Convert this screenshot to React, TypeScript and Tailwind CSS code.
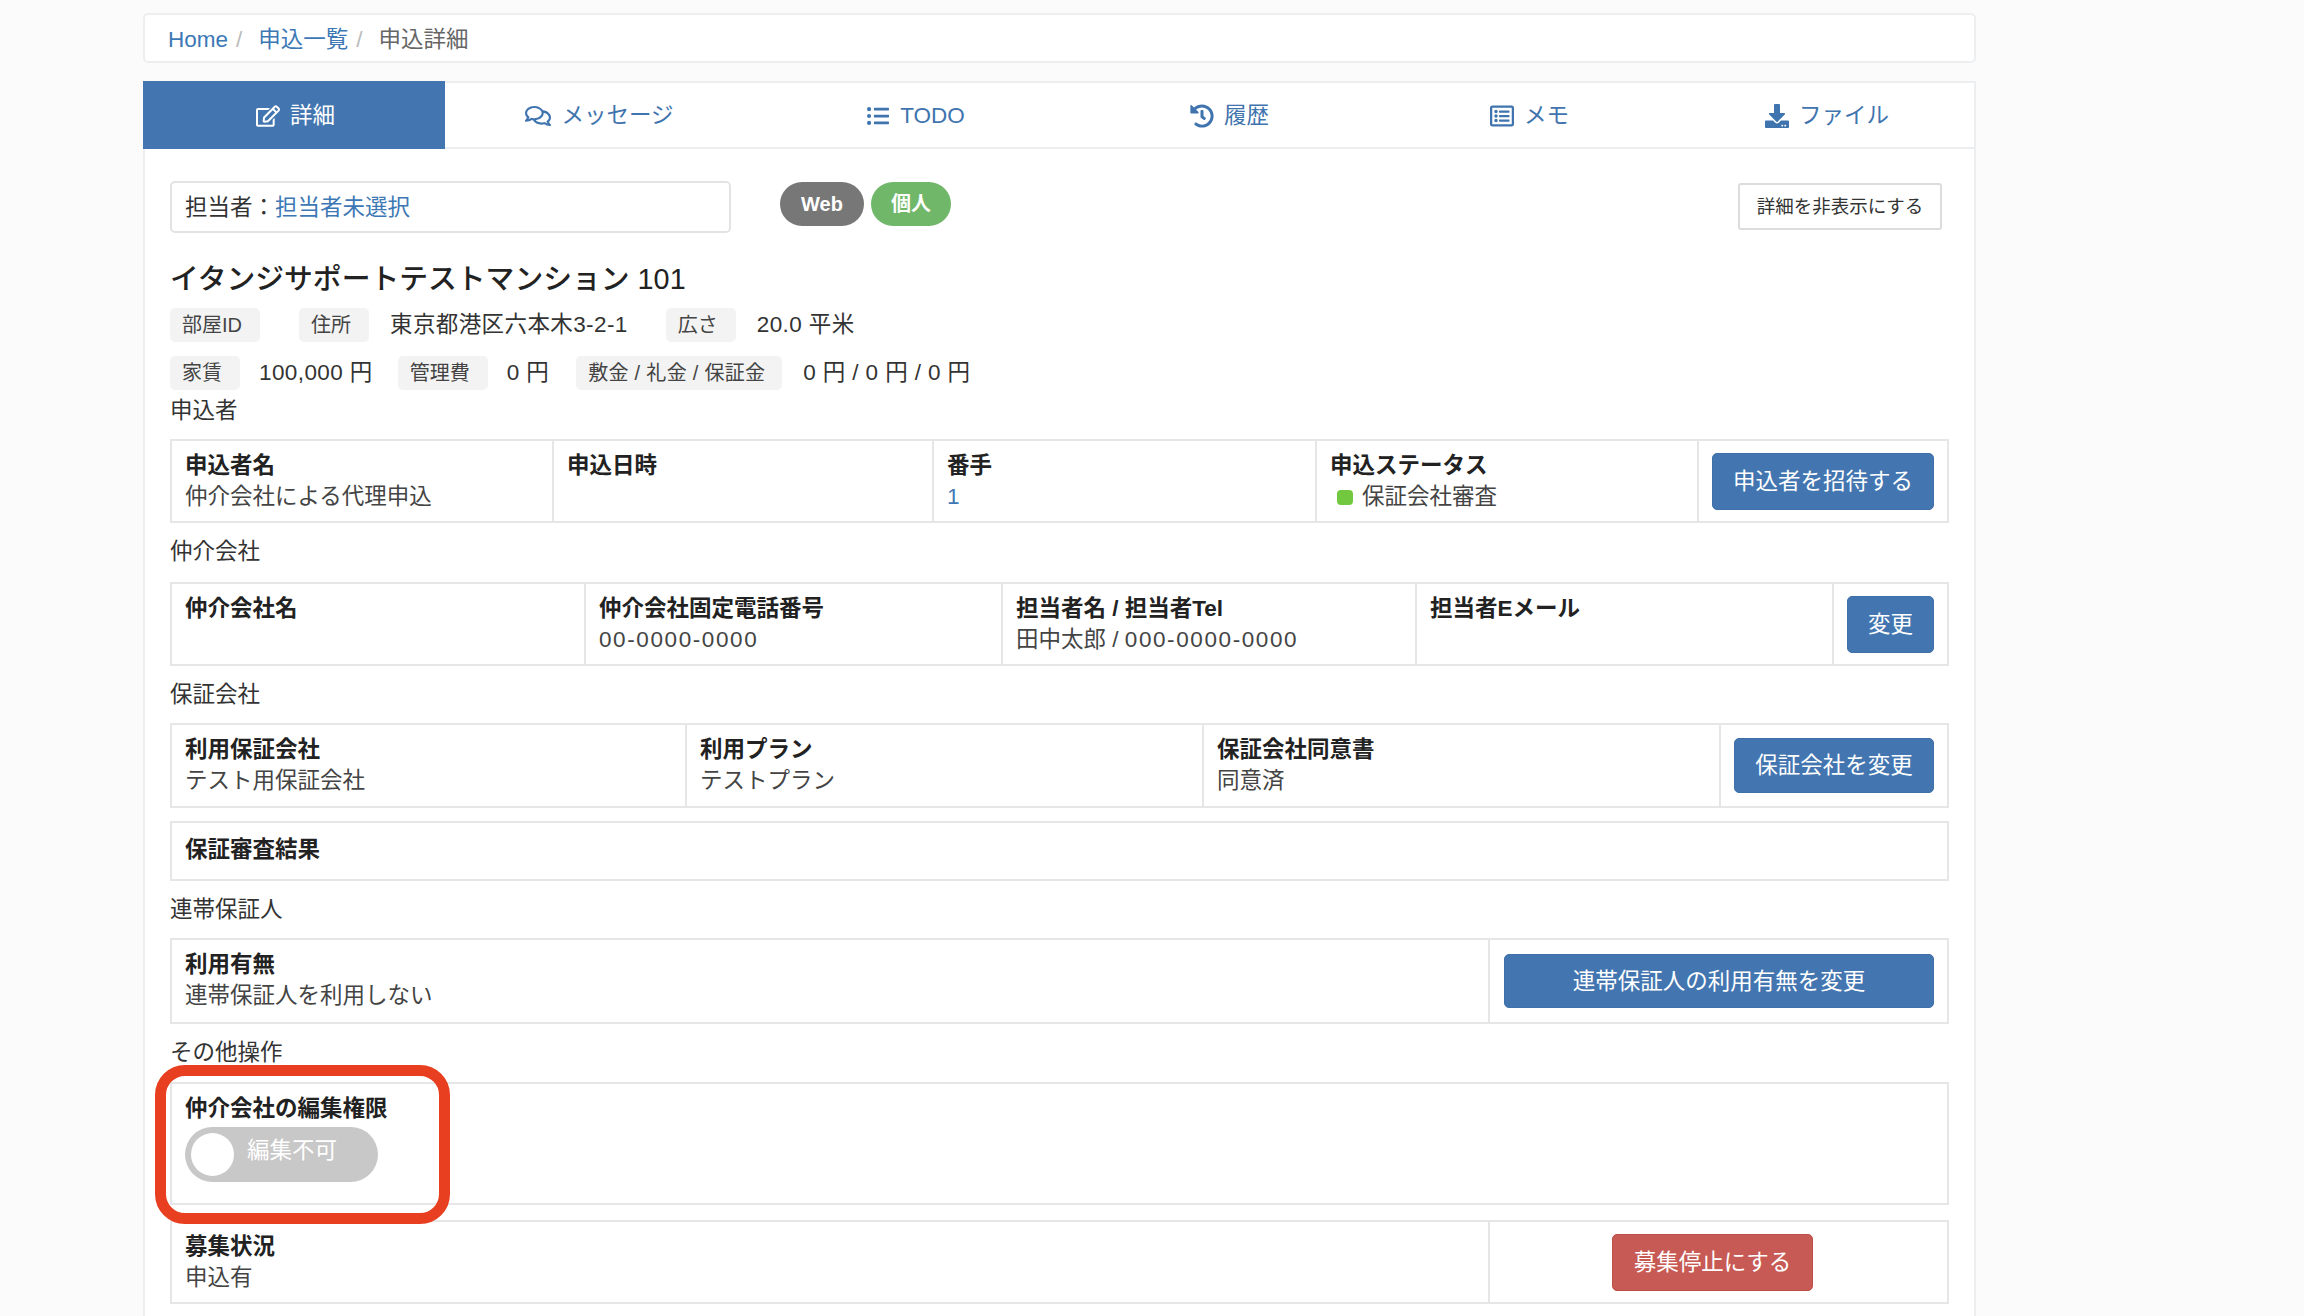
import { FaRegEdit, FaRegComments, FaListUl, FaHistory, FaRegListAlt, FaDownload } from "react-icons/fa";

const tabs = [
  { label: "詳細", icon: <FaRegEdit className="w-[24px] h-[24px]" />, active: true },
  { label: "メッセージ", icon: <FaRegComments className="w-[26px] h-[24px]" /> },
  { label: "TODO", icon: <FaListUl className="w-[24px] h-[22px]" /> },
  { label: "履歴", icon: <FaHistory className="w-[24px] h-[24px]" /> },
  { label: "メモ", icon: <FaRegListAlt className="w-[24px] h-[24px]" /> },
  { label: "ファイル", icon: <FaDownload className="w-[24px] h-[24px]" /> },
];

const Chip = ({ children, className = "" }: { children: React.ReactNode; className?: string }) => (
  <span className={`h-[34px] pl-[12px] pr-[18px] rounded-[5px] bg-[#f3f3f3] text-[20px] text-[#444] whitespace-nowrap flex items-center ${className}`}>
    {children}
  </span>
);

const Cell = ({ label, value, className = "" }: { label: string; value?: React.ReactNode; className?: string }) => (
  <div className={`px-[13px] pt-[9px] border-r-2 border-[#e6e6e6] ${className}`}>
    <div className="font-bold leading-[32px] text-[#222]">{label}</div>
    {value && <div className="leading-[30px] text-[#444]">{value}</div>}
  </div>
);

const Btn = ({ children, className = "" }: { children: React.ReactNode; className?: string }) => (
  <button className={`rounded-[5px] bg-[#4376b0] border border-[#3f70a8] text-white pt-[1px] flex items-center justify-center ${className}`}>
    {children}
  </button>
);

const SectionLabel = ({ children, className = "" }: { children: React.ReactNode; className?: string }) => (
  <div className={`leading-[32px] text-[#333] ${className}`}>{children}</div>
);

const App = () => {
  return (
    <div className="w-[2304px] h-[1316px] overflow-hidden bg-[#fbfbfc] pl-[143px] pt-[13px] text-[22.5px] font-['Liberation_Sans','Noto_Sans_CJK_JP',sans-serif] text-[#333]">
      <div className="w-[1833px] h-[50px] bg-white border-2 border-[#eceef0] rounded-[5px] pl-[23px] pt-[3px] flex items-center gap-[8px]">
        <span className="text-[#3d78b5]">Home</span>
        <span className="text-[#bbb]">/</span>
        <span className="ml-[8px] text-[#3d78b5]">申込一覧</span>
        <span className="text-[#bbb]">/</span>
        <span className="ml-[8px] text-[#666]">申込詳細</span>
      </div>

      <div className="w-[1833px] h-[1240px] mt-[18px] bg-white border-x-2 border-t-2 border-[#eceef0]">
        <div className="grid grid-cols-[300px_306px_326px_302px_298px_297px] h-[66px] border-b-2 border-[#eceef0]">
          {tabs.map((tab) => (
            <div
              key={tab.label}
              className={`flex items-center justify-center gap-[10px] pt-[2px] pl-[3px] ${tab.active ? "bg-[#4376b0] text-white -mb-[2px] -mt-[2px] -ml-[2px]" : "text-[#3f74ae]"}`}
            >
              {tab.icon}
              <span>{tab.label}</span>
            </div>
          ))}
        </div>

        <div className="pl-[25px] pr-[25px]">
          <div className="flex items-start pt-[32px]">
            <div className="w-[561px] h-[52px] border-2 border-[#e3e3e3] rounded-[5px] pl-[13px] pt-[2px] flex items-center">
              <span>担当者：</span>
              <span className="text-[#3d78b5]">担当者未選択</span>
            </div>
            <div className="ml-[49px] mt-[1px] flex gap-[7px] text-[20px] font-bold text-white">
              <span className="w-[84px] h-[44px] rounded-full bg-[#777] flex items-center justify-center">Web</span>
              <span className="w-[80px] h-[44px] rounded-full bg-[#70b769] flex items-center justify-center">個人</span>
            </div>
            <button className="ml-auto mr-[7px] mt-[2px] w-[204px] h-[47px] bg-white border-2 border-[#dcdcdc] rounded-[3px] text-[18.5px] text-[#333] flex items-center justify-center">
              詳細を非表示にする
            </button>
          </div>

          <div className="mt-[27px] h-[40px] flex items-center text-[28.8px] font-medium text-[#222]">
            イタンジサポートテストマンション 101
          </div>

          <div className="mt-[8px] flex items-center">
            <Chip>部屋ID</Chip>
            <Chip className="ml-[39px]">住所</Chip>
            <span className="ml-[21px] tracking-[0.4px]">東京都港区六本木3-2-1</span>
            <Chip className="ml-[38px]">広さ</Chip>
            <span className="ml-[21px] tracking-[0.4px]">20.0 平米</span>
          </div>
          <div className="mt-[14px] flex items-center">
            <Chip>家賃</Chip>
            <span className="ml-[19px] tracking-[0.4px]">100,000 円</span>
            <Chip className="ml-[25px]">管理費</Chip>
            <span className="ml-[19px] tracking-[0.4px]">0 円</span>
            <Chip className="ml-[27px] w-[206px] tracking-[0.3px]">敷金 / 礼金 / 保証金</Chip>
            <span className="ml-[21px] tracking-[0.4px]">0 円 / 0 円 / 0 円</span>
          </div>

          <SectionLabel className="mt-[5px] mb-[12px]">申込者</SectionLabel>
          <div className="w-[1779px] h-[84px] border-2 border-[#e6e6e6] grid grid-cols-[382px_380px_383px_382px_1fr]">
            <Cell label="申込者名" value="仲介会社による代理申込" />
            <Cell label="申込日時" />
            <Cell label="番手" value={<span className="text-[#3d78b5]">1</span>} />
            <Cell
              label="申込ステータス"
              value={
                <span className="flex items-center pl-[7px] gap-[9px]">
                  <span className="w-[16px] h-[15px] rounded-[4px] bg-[#72c93f]" />
                  保証会社審査
                </span>
              }
            />
            <div className="flex items-center justify-end pr-[13px]">
              <Btn className="w-[222px] h-[57px]">申込者を招待する</Btn>
            </div>
          </div>

          <SectionLabel className="mt-[13px] mb-[14px]">仲介会社</SectionLabel>
          <div className="w-[1779px] h-[84px] border-2 border-[#e6e6e6] grid grid-cols-[414px_417px_414px_417px_1fr]">
            <Cell label="仲介会社名" />
            <Cell label="仲介会社固定電話番号" value={<span className="tracking-[1.6px]">00-0000-0000</span>} />
            <Cell label="担当者名 / 担当者Tel" value={<span>田中太郎 / <span className="tracking-[1.6px]">000-0000-0000</span></span>} />
            <Cell label="担当者Eメール" />
            <div className="flex items-center justify-end pr-[13px]">
              <Btn className="w-[87px] h-[57px]">変更</Btn>
            </div>
          </div>

          <SectionLabel className="mt-[13px] mb-[12px]">保証会社</SectionLabel>
          <div className="w-[1779px] h-[85px] border-2 border-[#e6e6e6] grid grid-cols-[515px_517px_517px_1fr]">
            <Cell label="利用保証会社" value="テスト用保証会社" />
            <Cell label="利用プラン" value="テストプラン" />
            <Cell label="保証会社同意書" value="同意済" />
            <div className="flex items-center justify-end pr-[13px]">
              <Btn className="w-[200px] h-[55px]">保証会社を変更</Btn>
            </div>
          </div>

          <div className="mt-[13px] w-[1779px] h-[60px] border-2 border-[#e6e6e6] px-[13px] pb-[3px] flex items-center font-bold text-[#222]">
            保証審査結果
          </div>

          <SectionLabel className="mt-[13px] mb-[12px]">連帯保証人</SectionLabel>
          <div className="w-[1779px] h-[86px] border-2 border-[#e6e6e6] grid grid-cols-[1318px_1fr]">
            <Cell label="利用有無" value="連帯保証人を利用しない" />
            <div className="flex items-center justify-end pr-[13px]">
              <Btn className="w-[430px] h-[54px]">連帯保証人の利用有無を変更</Btn>
            </div>
          </div>

          <SectionLabel className="mt-[13px] mb-[13px]">その他操作</SectionLabel>
          <div className="relative w-[1779px] h-[123px] border-2 border-[#e6e6e6] px-[13px] pt-[9px]">
            <div className="font-bold leading-[32px] text-[#222]">仲介会社の編集権限</div>
            <div className="mt-[2px] w-[193px] h-[55px] rounded-full bg-[#c8c8c8] relative flex items-center">
              <span className="absolute left-[6px] top-[6px] w-[43px] h-[43px] rounded-full bg-white" />
              <span className="ml-[62px] -mt-[8px] text-white">編集不可</span>
            </div>
            <div className="absolute -left-[17px] -top-[19px] w-[295px] h-[159px] border-[11px] border-[#e83f20] rounded-[30px]" />
          </div>

          <div className="mt-[15px] w-[1779px] h-[84px] border-2 border-[#e6e6e6] grid grid-cols-[1318px_1fr]">
            <Cell label="募集状況" value="申込有" />
            <div className="flex items-center justify-center pr-[12px]">
              <Btn className="w-[201px] h-[57px] !bg-[#c75a54] !border-[#bd4d47]">募集停止にする</Btn>
            </div>
          </div>
        </div>
      </div>
    </div>
  );
};

export default App;
